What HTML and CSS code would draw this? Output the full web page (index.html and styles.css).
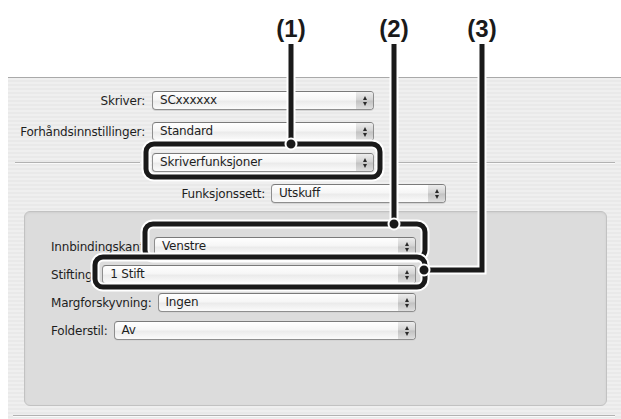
FILE: index.html
```html
<html>
<head>
<meta charset="utf-8" />
<title>Skriverfunksjoner</title>
<link rel="stylesheet" href="styles.css">
</head>
<body>
<div class="page">
	<div class="top-space"></div>

	<div class="sheet">
		<div class="row first">
			<span class="label">Skriver:</span>
			<div class="popup top-pop"><span class="value">SCxxxxxx</span><span class="step"><i class="up"></i><i class="down"></i></span></div>
		</div>
		<div class="row">
			<span class="label">Forhåndsinnstillinger:</span>
			<div class="popup top-pop"><span class="value">Standard</span><span class="step"><i class="up"></i><i class="down"></i></span></div>
		</div>
		<div class="row">
			<span class="label"><span class="rule left-rule"></span></span>
			<div class="popup top-pop"><span class="value">Skriverfunksjoner</span><span class="step"><i class="up"></i><i class="down"></i></span></div>
			<span class="rule right-rule"></span>
		</div>
		<div class="row">
			<span class="label wide">Funksjonssett:</span>
			<div class="popup set-pop"><span class="value">Utskuff</span><span class="step"><i class="up"></i><i class="down"></i></span></div>
		</div>

		<div class="group">
			<div class="grow">
				<span class="glabel">Innbindingskant:</span>
				<div class="popup fill"><span class="value">Venstre</span><span class="step"><i class="up"></i><i class="down"></i></span></div>
			</div>
			<div class="grow">
				<span class="glabel">Stifting:</span>
				<div class="popup fill"><span class="value">1 Stift</span><span class="step"><i class="up"></i><i class="down"></i></span></div>
			</div>
			<div class="grow">
				<span class="glabel">Margforskyvning:</span>
				<div class="popup fill"><span class="value">Ingen</span><span class="step"><i class="up"></i><i class="down"></i></span></div>
			</div>
			<div class="grow">
				<span class="glabel">Folderstil:</span>
				<div class="popup fill"><span class="value">Av</span><span class="step"><i class="up"></i><i class="down"></i></span></div>
			</div>
		</div>

		<div class="rule bottom-rule"></div>
	</div>

	<svg class="callouts" width="621" height="419">
		<g class="halo">
			<path d="M291 44 V144" />
			<rect x="146" y="144" width="234" height="33" rx="8" />
			<path d="M394 44 V224" />
			<rect x="145" y="224" width="280" height="34" rx="8" />
		</g>
		<g class="ink">
			<path d="M291 44 V144" />
			<rect x="146" y="144" width="234" height="33" rx="8" />
			<path d="M394 44 V224" />
			<rect x="145" y="224" width="280" height="34" rx="8" />
		</g>
		<g class="halo">
			<rect x="95" y="257" width="330" height="30" rx="8" />
			<path d="M482 44 V270 H424" />
		</g>
		<g class="ink">
			<rect x="95" y="257" width="330" height="30" rx="8" />
			<path d="M482 44 V270 H424" />
		</g>
		<circle cx="291" cy="144" r="5.5" />
		<circle cx="394" cy="224" r="5.5" />
		<circle cx="424" cy="270" r="5.5" />
		<text x="291" y="37">(1)</text>
		<text x="394" y="37">(2)</text>
		<text x="482" y="37">(3)</text>
	</svg>
</div>
</body>
</html>
```

FILE: styles.css
```css
body {
	margin: 0;
	background-color: #ffffff;
	font-family: "DejaVu Sans", Verdana, sans-serif;
	font-size: 12px;
	letter-spacing: -0.2px;
	color: #1e1e1e;
}

.page {
	position: relative;
	width: 621px;
	height: 419px;
	overflow: hidden;
}

.top-space {
	height: 77px;
}

.sheet {
	margin-left: 8px;
	height: 342px;
	border-top: 1px solid #a9a9a9;
	background: repeating-linear-gradient(to bottom, #efefef 0px, #efefef 2px, #e9e9e9 2px, #e9e9e9 4px);
	overflow: hidden;
}

.row {
	display: flex;
	align-items: center;
	height: 19px;
	margin-top: 12px;
}

.row.first {
	margin-top: 13px;
}

.label {
	display: flex;
	align-items: center;
	justify-content: flex-end;
	width: 137px;
	padding-right: 7px;
	white-space: nowrap;
}

.label.wide {
	width: 257px;
	padding-right: 6px;
}

.rule {
	display: block;
	height: 1px;
	background-color: #b2b2b2;
	border-bottom: 1px solid #fafafa;
}

.left-rule {
	width: 125px;
	margin-right: 5px;
}

.right-rule {
	flex: 1;
	margin-left: 16px;
	margin-right: 6px;
}

.popup {
	display: flex;
	box-sizing: border-box;
	height: 19px;
	border: 1px solid #8e8e8e;
	border-top-color: #7a7a7a;
	border-radius: 4px;
	background: linear-gradient(to bottom, #ffffff 0%, #f6f6f6 45%, #ebebeb 55%, #fbfbfb 100%);
	box-shadow: 0 1px 0 #d4d4d4;
	overflow: hidden;
}

.popup .value {
	flex: 1;
	padding-left: 7px;
	line-height: 17px;
	white-space: nowrap;
}

.popup .step {
	display: flex;
	flex-direction: column;
	align-items: center;
	justify-content: center;
	gap: 2px;
	width: 17px;
	background: linear-gradient(to bottom, #ededed 0%, #d2d2d2 48%, #c2c2c2 52%, #dedede 100%);
}

.step i {
	display: block;
	width: 0;
	height: 0;
	border-left: 2.5px solid transparent;
	border-right: 2.5px solid transparent;
}

.step .up {
	border-bottom: 4px solid #2a2a2a;
}

.step .down {
	border-top: 4px solid #2a2a2a;
}

.top-pop {
	width: 222px;
}

.set-pop {
	width: 175px;
}

.group {
	box-sizing: border-box;
	height: 195px;
	margin: 8px 14px 0 16px;
	padding: 25px 190px 0 26px;
	background-color: #dcdcdc;
	border: 1px solid #c2c2c2;
	border-radius: 6px;
	box-shadow: inset 0 1px 2px #cfcfcf;
}

.grow {
	display: flex;
	align-items: center;
	height: 19px;
	margin-bottom: 9px;
}

.glabel {
	padding-right: 6px;
	white-space: nowrap;
}

.popup.fill {
	flex: 1;
}

.bottom-rule {
	margin: 9px 6px 0 5px;
}

.callouts {
	position: absolute;
	top: 0;
	left: 0;
}

.callouts .halo path,
.callouts .halo rect {
	fill: none;
	stroke: #ffffff;
	stroke-width: 9;
}

.callouts .ink path,
.callouts .ink rect {
	fill: none;
	stroke: #1a1a1a;
	stroke-width: 5;
}

.callouts circle {
	fill: #1a1a1a;
	stroke: #ffffff;
	stroke-width: 2;
}

.callouts text {
	font-family: "Liberation Sans Narrow", "Liberation Sans", Arial, sans-serif;
	font-weight: bold;
	font-size: 24px;
	letter-spacing: 0;
	text-anchor: middle;
	fill: #1a1a1a;
}
```
